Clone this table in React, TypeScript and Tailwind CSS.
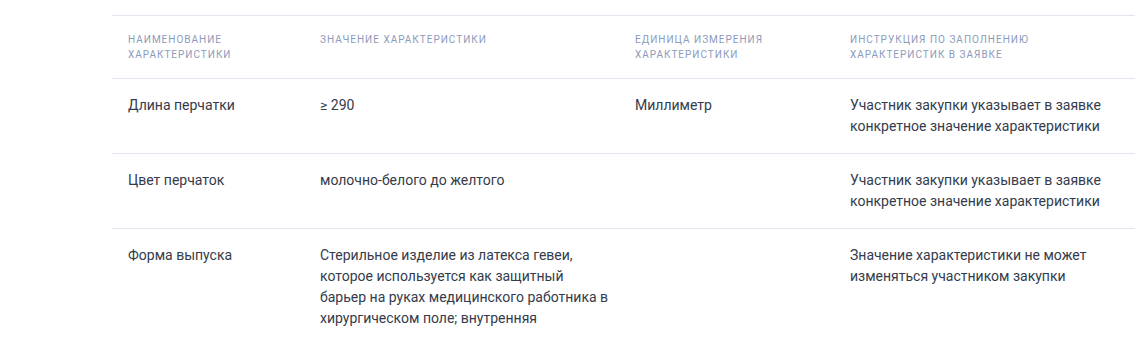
import React from "react";

type Row = { name: string; value: string; unit: string; hint: string };

const rows: Row[] = [
  {
    name: "Длина перчатки",
    value: "≥ 290",
    unit: "Миллиметр",
    hint: "Участник закупки указывает в заявке конкретное значение характеристики",
  },
  {
    name: "Цвет перчаток",
    value: "молочно-белого до желтого",
    unit: "",
    hint: "Участник закупки указывает в заявке конкретное значение характеристики",
  },
  {
    name: "Форма выпуска",
    value:
      "Стерильное изделие из латекса гевеи, которое используется как защитный барьер на руках медицинского работника в хирургическом поле; внутренняя",
    unit: "",
    hint: "Значение характеристики не может изменяться участником закупки",
  },
];

const headers = [
  "Наименование характеристики",
  "Значение характеристики",
  "Единица измерения характеристики",
  "Инструкция по заполнению характеристик в заявке",
];

const cols = "grid grid-cols-[192px_315px_215px_1fr]";

export default function App() {
  return (
    <div className="h-[343px] overflow-hidden bg-white pl-[112px] pt-[15px] font-['Roboto',sans-serif]">
      <div className="border-t border-[#e4e4ef]">
        {/* header */}
        <div className={`${cols} border-b border-[#e4e4ef]`}>
          {headers.map((h) => (
            <div
              key={h}
              className="px-4 pt-4 pb-4 text-[10px] leading-[15px] uppercase tracking-[1px] text-[#8c9abb]"
            >
              <span className="block max-w-[190px]">{h}</span>
            </div>
          ))}
        </div>

        {/* rows */}
        {rows.map((r) => (
          <div key={r.name} className={`${cols} border-b border-[#e4e4ef] text-sm leading-[21px] text-[#343b4c]`}>
            <div className="px-4 py-4">{r.name}</div>
            <div className="py-4 pl-4 pr-[6px]">{r.value}</div>
            <div className="px-4 py-4">{r.unit}</div>
            <div className="py-4 pl-4 pr-[16px]">
              <span className="block max-w-[260px]">{r.hint}</span>
            </div>
          </div>
        ))}
      </div>
    </div>
  );
}
